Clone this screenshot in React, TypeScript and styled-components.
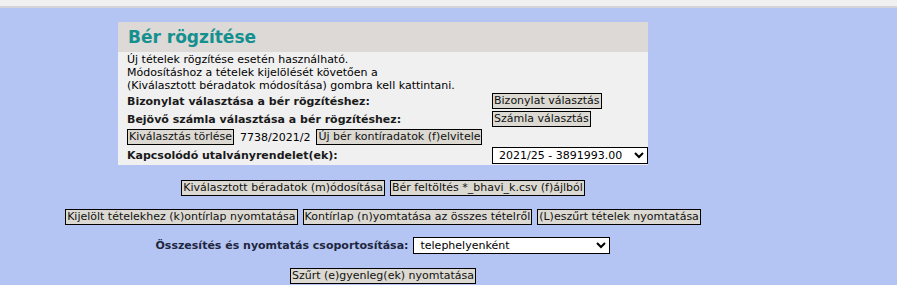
import React from 'react';
import styled, { createGlobalStyle } from 'styled-components';

const GlobalStyle = createGlobalStyle`
  html, body {
    margin: 0;
    padding: 0;
    background: #b4c5f4;
    font-family: Verdana, "DejaVu Sans", sans-serif;
    font-size: 11px;
    color: #000;
  }
`;

const TopStrip = styled.div`
  height: 6px;
  background: #f0f0f0;
  border-bottom: 2px solid #d4d4d8;
`;

const Content = styled.div`
  width: 766px;
  display: flex;
  flex-direction: column;
  align-items: center;
  padding-top: 14px;
`;

const Panel = styled.div`
  width: 530px;
  background: #f0f0f0;
`;

const PanelHeader = styled.div`
  background: #dcd9d6;
  height: 30px;
  display: flex;
  align-items: center;
  padding-left: 10px;
`;

const Title = styled.h2`
  margin: 0;
  font-size: 17px;
  font-weight: bold;
  color: #14908f;
`;

const PanelBody = styled.div`
  padding: 1px 0 0 9px;
`;

const Info = styled.div`
  line-height: 13px;
`;

const Row = styled.div<{ $h?: number }>`
  display: grid;
  grid-template-columns: 365px 1fr;
  align-items: center;
  height: ${(p) => p.$h ?? 18}px;
`;

const Label = styled.span`
  font-weight: bold;
  color: #1a1a1a;
`;

const GroupLabel = styled(Label)`
  color: #1e2640;
`;

const InlineRow = styled.div`
  display: flex;
  align-items: center;
  gap: 6px;
  height: 18px;
`;

const Button = styled.button`
  font-family: inherit;
  font-size: 11px;
  color: #111;
  background: #dbd9d2;
  border: 1px solid #000;
  border-radius: 0;
  padding: 0 1px;
  height: 16px;
  line-height: 14px;
  margin: 0;
  white-space: nowrap;
`;

const Select = styled.select<{ $width: number }>`
  font-family: inherit;
  font-size: 11px;
  color: #000;
  background: #fff;
  border: 1px solid #000;
  border-radius: 0;
  height: 17px;
  width: ${(p) => p.$width}px;
  padding: 0 2px;
  margin: 0;
`;

const ActionRow = styled.div<{ $top: number }>`
  display: flex;
  align-items: center;
  gap: 5px;
  height: 17px;
  margin-top: ${(p) => p.$top}px;
`;

const App: React.FC = () => (
  <>
    <GlobalStyle />
    <TopStrip />
    <Content>
      <Panel>
        <PanelHeader>
          <Title>Bér rögzítése</Title>
        </PanelHeader>
        <PanelBody>
          <Info>
            Új tételek rögzítése esetén használható.
            <br />
            Módosításhoz a tételek kijelölését követően a
            <br />
            (Kiválasztott béradatok módosítása) gombra kell kattintani.
          </Info>
          <Row>
            <Label>Bizonylat választása a bér rögzítéshez:</Label>
            <div>
              <Button>Bizonylat választás</Button>
            </div>
          </Row>
          <Row>
            <Label>Bejövő számla választása a bér rögzítéshez:</Label>
            <div>
              <Button>Számla választás</Button>
            </div>
          </Row>
          <InlineRow>
            <Button>Kiválasztás törlése</Button>
            <span>7738/2021/2</span>
            <Button>Új bér kontíradatok (f)elvitele</Button>
          </InlineRow>
          <Row $h={19}>
            <Label>Kapcsolódó utalványrendelet(ek):</Label>
            <div>
              <Select $width={156} defaultValue="a">
                <option value="a">2021/25 - 3891993.00</option>
              </Select>
            </div>
          </Row>
        </PanelBody>
      </Panel>

      <ActionRow $top={14}>
        <Button>Kiválasztott béradatok (m)ódosítása</Button>
        <Button>Bér feltöltés *_bhavi_k.csv (f)ájlból</Button>
      </ActionRow>
      <ActionRow $top={12}>
        <Button>Kijelölt tételekhez (k)ontírlap nyomtatása</Button>
        <Button>Kontírlap (n)yomtatása az összes tételről</Button>
        <Button>(L)eszűrt tételek nyomtatása</Button>
      </ActionRow>
      <ActionRow $top={12}>
        <GroupLabel>Összesítés és nyomtatás csoportosítása:</GroupLabel>
        <Select $width={197} defaultValue="t">
          <option value="t">telephelyenként</option>
        </Select>
      </ActionRow>
      <ActionRow $top={13}>
        <Button>Szűrt (e)gyenleg(ek) nyomtatása</Button>
      </ActionRow>
    </Content>
  </>
);

export default App;
